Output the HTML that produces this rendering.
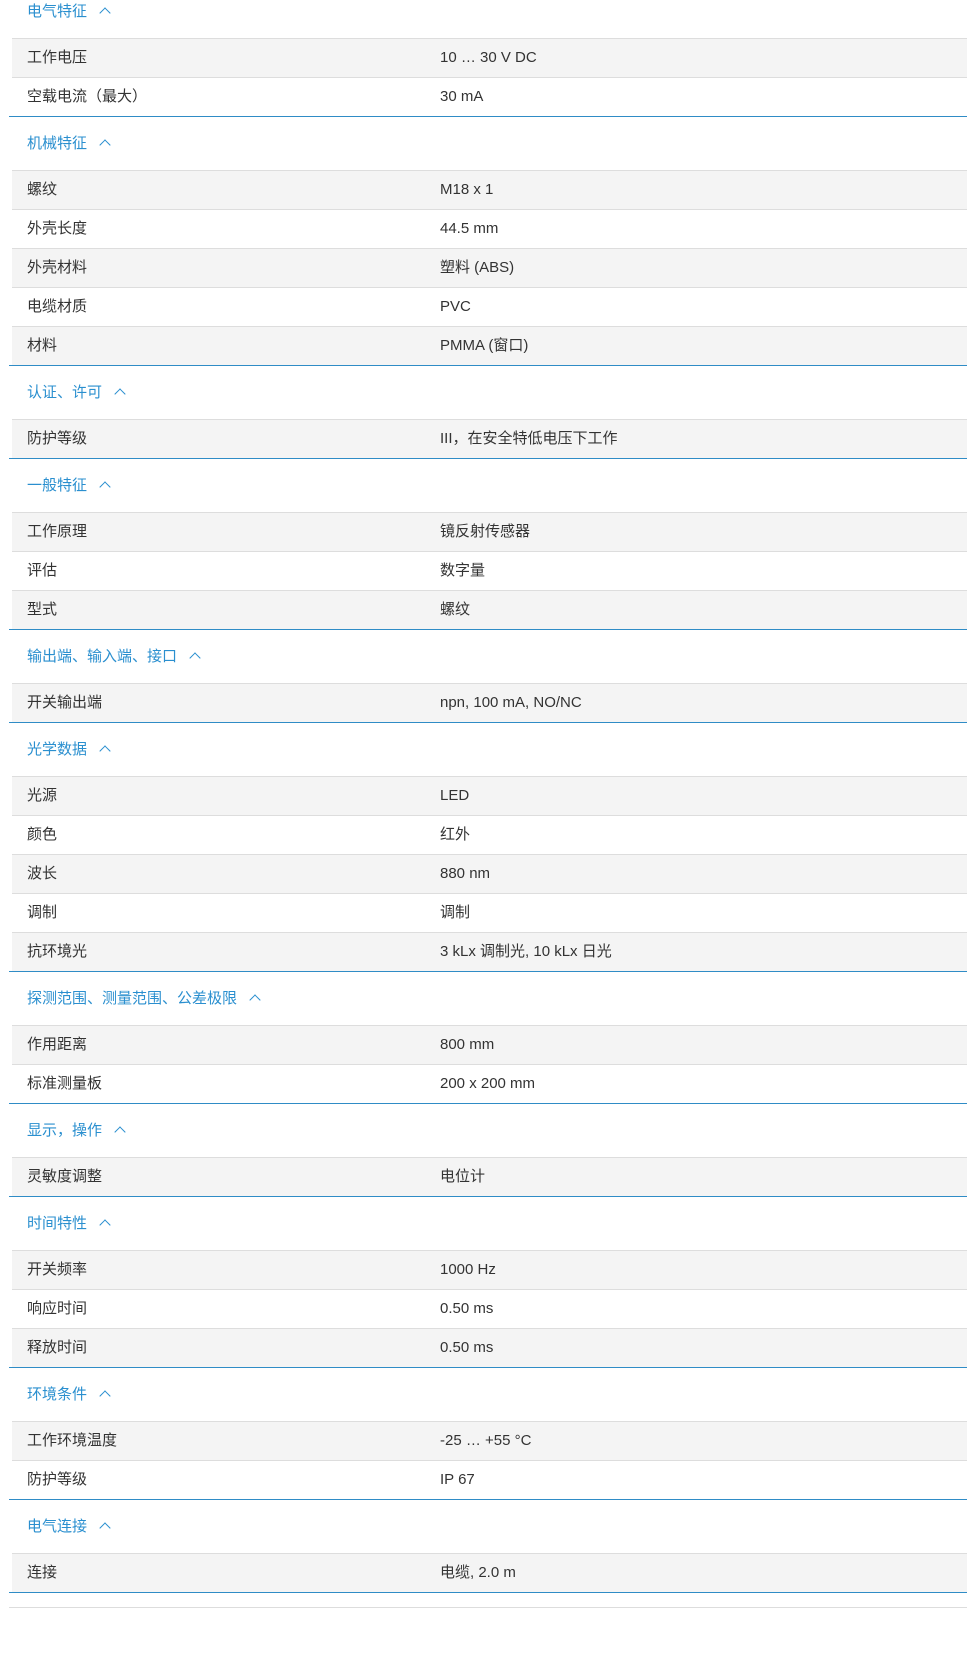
<!DOCTYPE html>
<html><head><meta charset="utf-8"><style>
html,body{margin:0;padding:0;background:#fff;width:967px;height:1674px;overflow:hidden}
body{font-family:"Liberation Sans","Noto Sans CJK SC",sans-serif;font-size:15px;color:#333}
.wrap{margin-top:-15px}
.sec{margin-left:9px;border-bottom:1px solid #2f8cc6}
.h{height:53px;line-height:53px;padding-left:18px;color:#2a8fcf;position:relative}
.h span.c{display:inline-block;margin-left:14px;width:7px;height:7px;border-left:1.2px solid #2a8fcf;border-top:1.2px solid #2a8fcf;transform:rotate(45deg);position:relative;top:1px}
.r{margin-left:3px;height:38px;line-height:38px;border-top:1px solid #ddd;position:relative;padding-left:15px}
.r:nth-child(even){background:#f4f4f4}
.r b{font-weight:normal;position:absolute;left:428px;top:0}
.end{margin-left:9px;margin-top:14px;border-top:1px solid #ddd}
</style></head><body><div class="wrap">
<div class="sec"><div class="h">电气特征<span class="c"></span></div>
<div class="r">工作电压<b>10 … 30 V DC</b></div>
<div class="r">空载电流（最大）<b>30 mA</b></div></div>
<div class="sec"><div class="h">机械特征<span class="c"></span></div>
<div class="r">螺纹<b>M18 x 1</b></div>
<div class="r">外壳长度<b>44.5 mm</b></div>
<div class="r">外壳材料<b>塑料 (ABS)</b></div>
<div class="r">电缆材质<b>PVC</b></div>
<div class="r">材料<b>PMMA (窗口)</b></div></div>
<div class="sec"><div class="h">认证、许可<span class="c"></span></div>
<div class="r">防护等级<b>III，在安全特低电压下工作</b></div></div>
<div class="sec"><div class="h">一般特征<span class="c"></span></div>
<div class="r">工作原理<b>镜反射传感器</b></div>
<div class="r">评估<b>数字量</b></div>
<div class="r">型式<b>螺纹</b></div></div>
<div class="sec"><div class="h">输出端、输入端、接口<span class="c"></span></div>
<div class="r">开关输出端<b>npn, 100 mA, NO/NC</b></div></div>
<div class="sec"><div class="h">光学数据<span class="c"></span></div>
<div class="r">光源<b>LED</b></div>
<div class="r">颜色<b>红外</b></div>
<div class="r">波长<b>880 nm</b></div>
<div class="r">调制<b>调制</b></div>
<div class="r">抗环境光<b>3 kLx 调制光, 10 kLx 日光</b></div></div>
<div class="sec"><div class="h">探测范围、测量范围、公差极限<span class="c"></span></div>
<div class="r">作用距离<b>800 mm</b></div>
<div class="r">标准测量板<b>200 x 200 mm</b></div></div>
<div class="sec"><div class="h">显示，操作<span class="c"></span></div>
<div class="r">灵敏度调整<b>电位计</b></div></div>
<div class="sec"><div class="h">时间特性<span class="c"></span></div>
<div class="r">开关频率<b>1000 Hz</b></div>
<div class="r">响应时间<b>0.50 ms</b></div>
<div class="r">释放时间<b>0.50 ms</b></div></div>
<div class="sec"><div class="h">环境条件<span class="c"></span></div>
<div class="r">工作环境温度<b>-25 … +55 °C</b></div>
<div class="r">防护等级<b>IP 67</b></div></div>
<div class="sec"><div class="h">电气连接<span class="c"></span></div>
<div class="r">连接<b>电缆, 2.0 m</b></div></div>
<div class="end"></div>
</div></body></html>
